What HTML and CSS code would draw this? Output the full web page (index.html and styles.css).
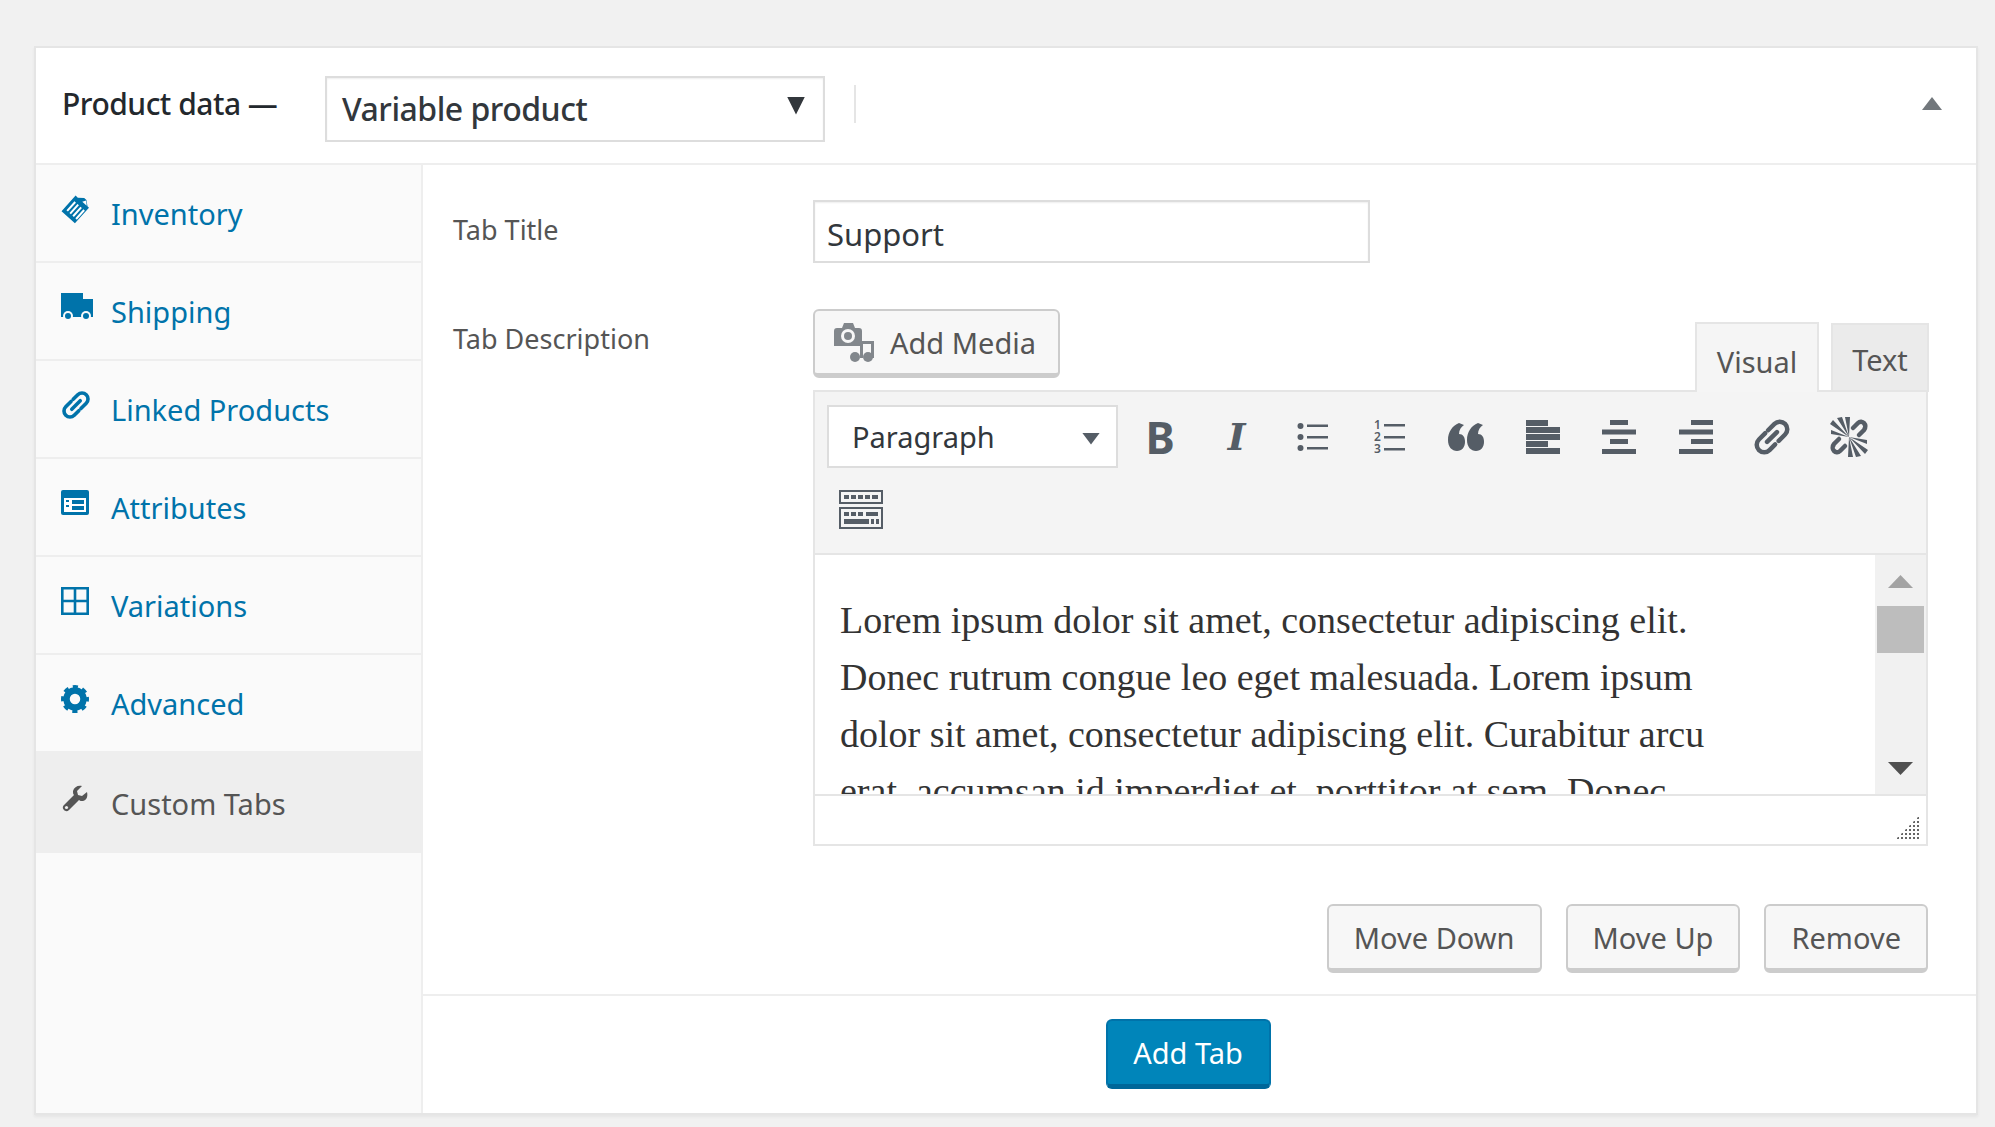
FILE: index.html
```html
<!DOCTYPE html>
<html lang="en">
<head>
    <meta charset="UTF-8">
    <meta name="viewport" content="width=device-width, initial-scale=1.0">
    <title>Product data</title>
    <link rel="stylesheet" href="styles.css">
</head>
<body>
    <div class="panel">
        <div class="panel-head">
            <span class="panel-title">Product data —</span>
            <div class="type-select">
                <span>Variable product</span>
                <i class="type-arrow"></i>
            </div>
            <span class="head-sep"></span>
            <i class="collapse-arrow"></i>
        </div>
        <div class="panel-body">
            <ul class="side-tabs">
                <li class="side-tab">
                    <svg class="side-icon" width="32" height="32" viewBox="0 0 32 32">
                        <g transform="rotate(42 16 16)">
                            <path fill="#0073aa" d="M6 7h3l5-4h3l5 4h2v21H6z"/>
                            <path fill="#fff" d="M17 3.5l4 3.5h-6z"/>
                            <path fill="#fff" d="M10 11h12v2H10zM10 15h12v2H10zM10 19h12v2H10zM10 23h12v2H10z" transform="rotate(90 16 18)"/>
                        </g>
                    </svg>
                    <a href="#">Inventory</a>
                </li>
                <li class="side-tab">
                    <svg class="side-icon" width="32" height="28" viewBox="0 0 32 28">
                        <path fill="#0073aa" d="M0 0h22v6h10v18H0z"/>
                        <circle cx="7" cy="23" r="5" fill="#fafafa"/>
                        <circle cx="25" cy="23" r="5" fill="#fafafa"/>
                        <circle cx="7" cy="23" r="3" fill="#0073aa"/>
                        <circle cx="25" cy="23" r="3" fill="#0073aa"/>
                    </svg>
                    <a href="#">Shipping</a>
                </li>
                <li class="side-tab">
                    <svg class="side-icon" width="30" height="30" viewBox="0 0 30 30">
                        <g transform="rotate(-45 15 15)" fill="none" stroke="#0073aa" stroke-width="3.6" stroke-linecap="round">
                            <path d="M14 9H6.5a6 6 0 0 0 0 12H13"/>
                            <path d="M17 9h6.500a6 6 0 0 1 0 12H16"/>
                            <path d="M9 15h12"/>
                        </g>
                    </svg>
                    <a href="#">Linked Products</a>
                </li>
                <li class="side-tab">
                    <svg class="side-icon" width="28" height="25" viewBox="0 0 28 25">
                        <rect width="28" height="25" rx="2" fill="#0073aa"/>
                        <rect x="3" y="8" width="22" height="14" fill="#fff"/>
                        <path fill="#0073aa" d="M5 10h3v2H5zM5 15h3v2H5zM11 10h12v4H11zM11 16h12v4H11z"/>
                    </svg>
                    <a href="#">Attributes</a>
                </li>
                <li class="side-tab">
                    <svg class="side-icon" width="28" height="28" viewBox="0 0 28 28">
                        <path fill="none" stroke="#0073aa" stroke-width="2.600" d="M1.300 1.300h25.400v25.400H1.300zM14 1v26M1 14h26"/>
                    </svg>
                    <a href="#">Variations</a>
                </li>
                <li class="side-tab">
                    <svg class="side-icon" width="28" height="28" viewBox="0 0 28 28">
                        <circle cx="14" cy="14" r="8.500" fill="none" stroke="#0073aa" stroke-width="6.500"/>
                        <circle cx="14" cy="14" r="12" fill="none" stroke="#0073aa" stroke-width="4" stroke-dasharray="5 4.425" stroke-dashoffset="2.500"/>
                    </svg>
                    <a href="#">Advanced</a>
                </li>
                <li class="side-tab active">
                    <svg class="side-icon" width="28" height="28" viewBox="0 0 28 28">
                        <path fill="#555" d="M26 7l-5 4-4-1-1-4 5-5c-4-1-8 1-9 5 0 2 0 3 1 4L3 20c-2 2-1 4 0 5s3 2 5 0l10-10c1 1 2 1 4 1 4-1 5-5 4-9z"/>
                        <circle cx="5.500" cy="22.500" r="1.600" fill="#eee"/>
                    </svg>
                    <a href="#">Custom Tabs</a>
                </li>
            </ul>
            <div class="tab-main">
                <div class="tab-fields">
                    <div class="field">
                        <label class="field-label">Tab Title</label>
                        <input class="title-input" type="text" value="Support">
                    </div>
                    <div class="field field-desc">
                        <label class="field-label">Tab Description</label>
                        <div class="editor-wrap">
                            <div class="editor-tools">
                                <button class="media-btn" type="button">
                                    <svg width="41" height="40" viewBox="0 0 41 40">
                                        <path fill="#82878c" d="M0 9a3 3 0 0 1 3-3h5l2-5h9l2 5h4a3 3 0 0 1 3 3v15H0z"/>
                                        <circle cx="14" cy="14" r="7" fill="#f7f7f7"/>
                                        <circle cx="14" cy="14" r="4" fill="#82878c"/>
                                        <path fill="#82878c" d="M26 19h14v17h-3V22h-8v14h-3z"/>
                                        <circle cx="21" cy="35" r="5" fill="#82878c"/>
                                        <circle cx="34" cy="35" r="5" fill="#82878c"/>
                                        <path fill="#f7f7f7" d="M0 24h22v1H0z"/>
                                    </svg>
                                    Add Media
                                </button>
                                <div class="mode-tabs">
                                    <span class="mode-tab current">Visual</span>
                                    <span class="mode-tab">Text</span>
                                </div>
                            </div>
                            <div class="editor">
                                <div class="toolbar">
                                    <div class="tool-row">
                                        <div class="format-select">
                                            <span>Paragraph</span>
                                            <i class="format-arrow"></i>
                                        </div>
                                        <span class="tool"><b class="glyph-b">B</b></span>
                                        <span class="tool"><b class="glyph-i">I</b></span>
                                        <span class="tool">
                                            <svg width="32" height="32" viewBox="0 0 32 32">
                                                <g fill="#555d66"><circle cx="3.500" cy="5" r="3"/><circle cx="3.500" cy="16" r="3"/><circle cx="3.500" cy="27" r="3"/><path d="M10 3.500h21v2.500H10zM10 15h21v2.500H10zM10 26h21v2.500H10z"/></g>
                                            </svg>
                                        </span>
                                        <span class="tool">
                                            <svg width="32" height="34" viewBox="0 0 32 34">
                                                <g fill="#555d66"><text class="ol-num" x="0" y="9">1</text><text class="ol-num" x="0" y="21">2</text><text class="ol-num" x="0" y="33">3</text><path d="M10 4h21v2.500H10zM10 16h21v2.500H10zM10 28h21v2.500H10z"/></g>
                                            </svg>
                                        </span>
                                        <span class="tool">
                                            <svg width="36" height="30" viewBox="0 0 36 30">
                                                <path fill="#555d66" d="M11 1l5 2c-3 2-5 5-5 9 4 0 6 3 6 8s-3 9-8 9-9-4-9-11C0 10 4 4 11 1zM30 1l5 2c-3 2-5 5-5 9 4 0 6 3 6 8s-3 9-8 9-9-4-9-11c0-8 4-14 11-17z"/>
                                            </svg>
                                        </span>
                                        <span class="tool">
                                            <svg width="34" height="34" viewBox="0 0 34 34">
                                                <path fill="#555d66" d="M0 0h22v6H0zM0 14h34v6H0zM0 14zM0 21h22v6H0zM0 28h34v6H0z" transform="translate(0 0)"/>
                                                <path fill="#f4f4f4" d="M0 6h34v1H0zM0 13h34v1H0zM0 20h34v1H0zM0 27h34v1H0z"/>
                                                <path fill="#555d66" d="M0 7h34v6H0z"/>
                                                <path fill="#f4f4f4" d="M22 0h12v6H22zM22 21h12v6H22z"/>
                                                <path fill="#555d66" d="M0 14h22v6H0z" opacity="0"/>
                                            </svg>
                                        </span>
                                        <span class="tool">
                                            <svg width="34" height="34" viewBox="0 0 34 34">
                                                <path fill="#555d66" d="M8 0h18v6H8zM0 7.500h34v6H0zM8 20.500h18v6H8zM0 28h34v6H0zM8 14.500h18v5H8z" opacity="0"/>
                                                <path fill="#555d66" d="M8 0h18v5H8zM0 9.500h34v5H0zM8 19h18v5H8zM0 29h34v5H0z"/>
                                            </svg>
                                        </span>
                                        <span class="tool">
                                            <svg width="34" height="34" viewBox="0 0 34 34">
                                                <path fill="#555d66" d="M12 0h22v5H12zM0 9.500h34v5H0zM12 19h22v5H12zM0 29h34v5H0z"/>
                                            </svg>
                                        </span>
                                        <span class="tool">
                                            <svg width="40" height="40" viewBox="0 0 40 40">
                                                <g transform="rotate(-45 20 20)" fill="none" stroke="#555d66" stroke-width="4.500" stroke-linecap="round">
                                                    <path d="M18 12.500H9a7.500 7.500 0 0 0 0 15h8"/>
                                                    <path d="M22 12.500h9a7.500 7.500 0 0 1 0 15h-9"/>
                                                    <path d="M13 20h14"/>
                                                </g>
                                            </svg>
                                        </span>
                                        <span class="tool">
                                            <svg width="40" height="40" viewBox="0 0 40 40">
                                                <g fill="none" stroke="#555d66" stroke-width="4.500" stroke-linecap="round">
                                                    <path d="M24 11l5-5c4-4 10 2 6 7l-5 5"/>
                                                    <path d="M16 29l-5 5c-4 4-10-2-6-7l5-5"/>
                                                </g>
                                                <path fill="#555d66" d="M20 20L1 7l3-4zM20 20L8 1l5-1zM20 20L16 0h5zM20 20L39 33l-3 4zM20 20L32 39l-5 1zM20 20L24 40h-5zM20 20L2 13v4zM20 20L38 27v-4z"/>
                                            </svg>
                                        </span>
                                    </div>
                                    <div class="tool-row">
                                        <span class="tool">
                                            <svg width="44" height="39" viewBox="0 0 44 39">
                                                <path fill="none" stroke="#555d66" stroke-width="2" d="M1 1h42v12H1zM1 18h42v20H1z"/>
                                                <path fill="#555d66" d="M5 5h5v4H5zM12 5h5v4h-5zM19 5h5v4h-5zM26 5h5v4h-5zM33 5h6v4h-6zM5 22h5v4H5zM12 22h5v4h-5zM19 22h5v4h-5zM27 22h12v4H27zM5 29h25v5H5zM32 29h3v5h-3zM37 29h3v5h-3z"/>
                                            </svg>
                                        </span>
                                    </div>
                                </div>
                                <div class="editor-area">
                                    <div class="editor-text">
                                        Lorem ipsum dolor sit amet, consectetur adipiscing elit.<br>
                                        Donec rutrum congue leo eget malesuada. Lorem ipsum<br>
                                        dolor sit amet, consectetur adipiscing elit. Curabitur arcu<br>
                                        erat, accumsan id imperdiet et, porttitor at sem. Donec
                                    </div>
                                    <div class="scrollbar">
                                        <i class="scroll-up"></i>
                                        <i class="scroll-thumb"></i>
                                        <i class="scroll-down"></i>
                                    </div>
                                </div>
                                <div class="statusbar"><i class="resize-handle"></i></div>
                            </div>
                        </div>
                    </div>
                    <div class="tab-actions">
                        <button class="btn" type="button">Move Down</button>
                        <button class="btn" type="button">Move Up</button>
                        <button class="btn" type="button">Remove</button>
                    </div>
                </div>
                <div class="tab-foot">
                    <button class="btn-primary" type="button">Add Tab</button>
                </div>
            </div>
        </div>
    </div>
</body>
</html>
```

FILE: styles.css
```css
* {
    box-sizing: border-box;
}
body {
    margin: 0;
    padding: 46px 17px 0 34px;
    height: 1127px;
    overflow: hidden;
    background-color: #f1f1f1;
    font-family: "Noto Sans", "Open Sans", sans-serif;
    color: #555;
}
.panel {
    height: 1069px;
    background-color: #fff;
    border: 2px solid #e5e5e5;
    box-shadow: 0 2px 3px rgba(0, 0, 0, 0.05);
}
.panel-head {
    display: flex;
    align-items: center;
    height: 117px;
    padding: 0 34px 0 26px;
    border-bottom: 2px solid #eee;
}
.panel-title {
    width: 263px;
    margin-top: -5px;
    font-size: 30px;
    font-weight: 500;
    letter-spacing: -0.5px;
    color: #23282d;
}
.type-select {
    display: flex;
    align-items: center;
    justify-content: space-between;
    width: 500px;
    height: 66px;
    margin-top: 6px;
    padding: 0 15px 0 15px;
    border: 2px solid #ddd;
    box-shadow: inset 0 1px 2px rgba(0, 0, 0, 0.07);
    font-size: 32px;
    font-weight: 500;
    letter-spacing: -0.5px;
    color: #32373c;
}
.type-arrow {
    width: 18px;
    height: 18px;
    margin: -6px 3px 0 0;
    background-color: #32373c;
    clip-path: polygon(0 0, 100% 0, 50% 100%);
}
.head-sep {
    width: 2px;
    height: 38px;
    margin: -4px auto 0 29px;
    background-color: #e5e5e5;
}
.collapse-arrow {
    width: 20px;
    height: 13px;
    margin-top: -4px;
    background-color: #72777c;
    clip-path: polygon(50% 0, 100% 100%, 0 100%);
}
.panel-body {
    display: flex;
    height: 948px;
}
.side-tabs {
    flex: none;
    width: 387px;
    margin: 0;
    padding: 0;
    list-style: none;
    background-color: #fafafa;
    border-right: 2px solid #eee;
}
.side-tab {
    display: flex;
    align-items: center;
    height: 98px;
    padding-left: 25px;
    border-bottom: 2px solid #eee;
    font-size: 29px;
}
.side-tab a {
    position: relative;
    top: 3px;
    color: #0073aa;
    text-decoration: none;
}
.side-tab.active {
    height: 100px;
    border-bottom: 0;
    background-color: #eee;
}
.side-tab.active a {
    color: #555;
}
.side-icon {
    flex: none;
    margin: -9px 0 0 0;
}
.side-tab a {
    position: absolute;
    left: 111px;
    top: auto;
}
.tab-main {
    flex: 1;
    display: flex;
    flex-direction: column;
}
.tab-fields {
    height: 831px;
    padding: 35px 48px 0 30px;
    border-bottom: 2px solid #eee;
}
.field {
    display: flex;
}
.field-label {
    flex: none;
    width: 360px;
    padding-top: 11px;
    font-size: 27px;
}
.title-input {
    width: 557px;
    height: 63px;
    padding: 4px 12px 0;
    border: 2px solid #ddd;
    box-shadow: inset 0 1px 2px rgba(0, 0, 0, 0.07);
    font-family: inherit;
    font-size: 31px;
    color: #32373c;
}
.field-desc {
    margin-top: 46px;
}
.editor-wrap {
    width: 1115px;
}
.editor-tools {
    display: flex;
    justify-content: space-between;
    height: 81px;
}
.media-btn {
    display: flex;
    align-items: center;
    gap: 15px;
    width: 247px;
    height: 69px;
    padding: 0 0 0 19px;
    background-color: #f7f7f7;
    border: 2px solid #ccc;
    border-bottom-width: 5px;
    border-radius: 6px;
    font-family: inherit;
    font-size: 29px;
    color: #555;
}
.mode-tabs {
    display: flex;
    align-items: flex-end;
    gap: 12px;
    margin-right: -1px;
    position: relative;
    z-index: 1;
}
.mode-tab {
    display: flex;
    align-items: center;
    justify-content: center;
    width: 98px;
    height: 69px;
    margin-bottom: -2px;
    padding-top: 3px;
    background-color: #ebebeb;
    border: 2px solid #e5e5e5;
    font-size: 29px;
    color: #555;
}
.mode-tab.current {
    width: 124px;
    height: 70px;
    background-color: #f5f5f5;
    border-bottom: 0;
    padding-top: 6px;
}
.editor {
    border: 2px solid #e5e5e5;
}
.toolbar {
    height: 163px;
    padding: 13px 0 0 8px;
    background-color: #f4f4f4;
    border-bottom: 2px solid #e5e5e5;
}
.tool-row {
    display: flex;
    align-items: center;
}
.tool-row + .tool-row {
    margin-top: 10px;
}
.format-select {
    display: flex;
    align-items: center;
    justify-content: space-between;
    width: 291px;
    height: 63px;
    margin: 0 4px 0 4px;
    padding: 0 16px 0 23px;
    background-color: #fff;
    border: 2px solid #ddd;
    font-size: 29px;
    color: #32373c;
}
.format-arrow {
    width: 18px;
    height: 12px;
    margin-top: 4px;
    background-color: #555d66;
    clip-path: polygon(0 0, 100% 0, 50% 100%);
}
.tool {
    display: flex;
    align-items: center;
    justify-content: center;
    width: 76.5px;
    height: 63px;
}
.glyph-b {
    font-size: 44px;
    line-height: 1;
    color: #555d66;
}
.glyph-i {
    font-family: "DejaVu Serif", serif;
    font-size: 38px;
    font-style: italic;
    line-height: 1;
    color: #555d66;
}
.ol-num {
    font-size: 12px;
    font-weight: 600;
}
.editor-area {
    display: flex;
    height: 239px;
    background-color: #fff;
}
.editor-text {
    flex: 1;
    height: 239px;
    overflow: hidden;
    padding: 37px 0 0 25px;
    font-family: "Liberation Serif", serif;
    font-size: 38px;
    line-height: 57px;
    color: #333;
}
.scrollbar {
    flex: none;
    display: flex;
    flex-direction: column;
    align-items: center;
    width: 51px;
    padding-top: 20px;
    background-color: #f1f1f1;
}
.scroll-up {
    width: 25px;
    height: 13px;
    background-color: #a3a3a3;
    clip-path: polygon(50% 0, 100% 100%, 0 100%);
}
.scroll-thumb {
    width: 47px;
    height: 47px;
    margin-top: 18px;
    background-color: #bdbdbd;
}
.scroll-down {
    width: 25px;
    height: 13px;
    margin-top: 109px;
    background-color: #505050;
    clip-path: polygon(0 0, 100% 0, 50% 100%);
}
.statusbar {
    display: flex;
    justify-content: flex-end;
    height: 50px;
    padding: 20px 7px 0 0;
    background-color: #fff;
    border-top: 2px solid #e5e5e5;
}
.resize-handle {
    width: 23px;
    height: 23px;
    background-image: radial-gradient(circle, #666 1px, transparent 1.2px);
    background-size: 4px 4px;
    clip-path: polygon(100% 0, 100% 100%, 0 100%);
}
.tab-actions {
    display: flex;
    justify-content: flex-end;
    gap: 24px;
    margin-top: 58px;
}
.btn {
    height: 69px;
    padding: 0 25px;
    background-color: #f7f7f7;
    border: 2px solid #ccc;
    border-bottom-width: 5px;
    border-radius: 6px;
    font-family: inherit;
    font-size: 29px;
    color: #555;
}
.tab-foot {
    display: flex;
    justify-content: center;
    padding: 23px 23px 0 0;
}
.btn-primary {
    width: 165px;
    height: 70px;
    background-color: #0085ba;
    border: 2px solid #0073aa;
    border-bottom: 5px solid #006799;
    border-radius: 6px;
    font-family: inherit;
    font-size: 29px;
    color: #fff;
}
```
